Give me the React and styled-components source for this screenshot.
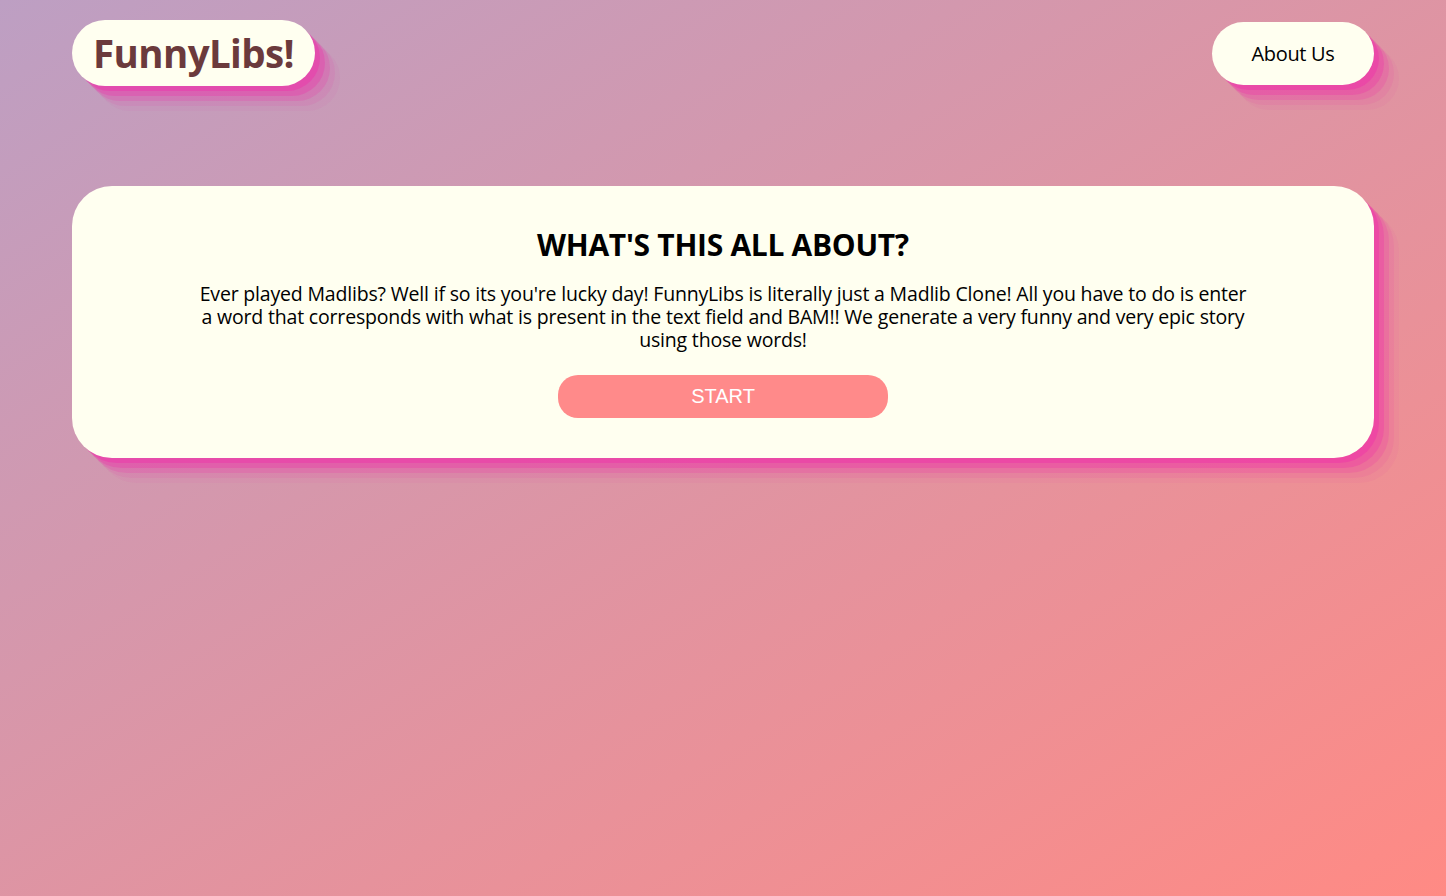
import styled, { createGlobalStyle } from "styled-components"

const GlobalStyle = createGlobalStyle`
  html, body {
    margin: 0;
    padding: 0;
  }
  body {
    min-height: 896px;
    background: linear-gradient(to bottom right, #bd9fc3, #ff8a84);
    font-family: "Open Sans", "Noto Sans", sans-serif;
  }
`

const pinkShadow = `
  rgba(240, 46, 170, 0.4) 5px 5px,
  rgba(240, 46, 170, 0.3) 10px 10px,
  rgba(240, 46, 170, 0.2) 15px 15px,
  rgba(240, 46, 170, 0.1) 20px 20px,
  rgba(240, 46, 170, 0.05) 25px 25px
`

const Page = styled.div`
  padding: 20px 72px;
`

const Navbar = styled.nav`
  display: flex;
  justify-content: space-between;
  align-items: center;
`

const Pill = styled.div`
  background: #fffff0;
  box-shadow: ${pinkShadow};
  display: flex;
  align-items: center;
  justify-content: center;
`

const Logo = styled(Pill)`
  height: 66px;
  padding: 0 21px;
  border-radius: 33px;
  color: #6b3a3c;
  font-size: 38.5px;
  font-weight: 700;
  letter-spacing: -0.6px;
`

const NavLink = styled(Pill)`
  height: 63px;
  width: 162px;
  border-radius: 32px;
  font-size: 20px;
  color: #000;
  letter-spacing: -0.3px;
  cursor: pointer;
`

const Card = styled.section`
  margin-top: 100px;
  background: #fffff0;
  border-radius: 40px;
  box-shadow: ${pinkShadow};
  padding: 41px 0 40px;
  display: flex;
  flex-direction: column;
  align-items: center;
`

const Heading = styled.h2`
  margin: 0;
  font-size: 30px;
  font-weight: 700;
  line-height: 36px;
  letter-spacing: -0.3px;
`

const Blurb = styled.p`
  margin: 19px 0 0;
  width: 1058px;
  text-align: center;
  font-size: 19.5px;
  line-height: 23px;
  letter-spacing: -0.18px;
`

const StartButton = styled.button`
  margin-top: 24px;
  width: 330px;
  height: 43px;
  border: none;
  border-radius: 20px;
  background: #ff8a8a;
  color: #fff;
  font-family: "Liberation Sans", Arial, sans-serif;
  font-size: 20px;
  cursor: pointer;
`

const App = () => {
  return (
    <Page>
      <GlobalStyle />
      <Navbar>
        <Logo>FunnyLibs!</Logo>
        <NavLink>About Us</NavLink>
      </Navbar>
      <Card>
        <Heading>WHAT'S THIS ALL ABOUT?</Heading>
        <Blurb>
          Ever played Madlibs? Well if so its you're lucky day! FunnyLibs is literally just a Madlib Clone! All you have to do is enter a word that corresponds with what is present in the text field and BAM!! We generate a very funny and very epic story using those words!
        </Blurb>
        <StartButton>START</StartButton>
      </Card>
    </Page>
  )
}

export default App
